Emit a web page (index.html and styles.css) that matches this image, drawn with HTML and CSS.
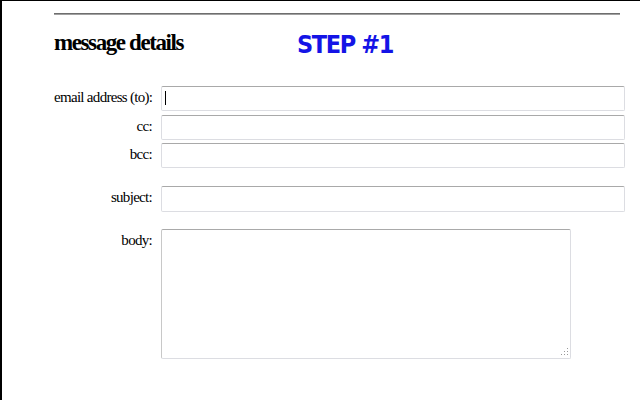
FILE: index.html
```html
<!DOCTYPE html>
<html>
<head>
<meta charset="utf-8">
<link rel="stylesheet" href="styles.css">
</head>
<body>
<div class="frame">
  <hr class="rule">
  <div class="header">
    <h1 class="title">message details</h1>
    <span class="step">STEP #1</span>
  </div>
  <form class="form">
    <div class="row row-to">
      <label class="label">email address (to):</label>
      <div class="field">
        <input class="input" type="text">
        <span class="caret"></span>
      </div>
    </div>
    <div class="row row-cc">
      <label class="label">cc:</label>
      <div class="field"><input class="input" type="text"></div>
    </div>
    <div class="row row-bcc">
      <label class="label">bcc:</label>
      <div class="field"><input class="input" type="text"></div>
    </div>
    <div class="row row-subject">
      <label class="label">subject:</label>
      <div class="field"><input class="input input-tall" type="text"></div>
    </div>
    <div class="row row-body">
      <label class="label">body:</label>
      <div class="field field-area">
        <textarea class="area"></textarea>
        <svg class="grip" width="9" height="10" viewBox="0 0 9 10">
          <rect x="7" y="1" width="1" height="1" fill="#999"/>
          <rect x="4" y="4" width="1" height="1" fill="#999"/>
          <rect x="7" y="4" width="1" height="1" fill="#999"/>
          <rect x="1" y="7" width="1" height="1" fill="#999"/>
          <rect x="4" y="7" width="1" height="1" fill="#999"/>
          <rect x="7" y="7" width="1" height="1" fill="#999"/>
        </svg>
      </div>
    </div>
  </form>
</div>
</body>
</html>
```
FILE: styles.css
```css
html, body {
  margin: 0;
  padding: 0;
  background: #fff;
}
.frame {
  box-sizing: border-box;
  width: 640px;
  height: 400px;
  border-top: 1px solid #000;
  border-left: 2px solid #000;
  padding: 12px 15px 0 52px;
  font-family: "Liberation Serif", "Times New Roman", serif;
  color: #000;
  overflow: hidden;
}
.rule {
  margin: 0;
  width: 566px;
  height: 0;
  border: 0;
  border-top: 1px solid #6e6e6e;
  border-bottom: 1px solid #a0a0a0;
}
.header {
  display: flex;
  align-items: flex-start;
}
.title {
  margin: 16px 0 0 0;
  width: 243px;
  font-size: 23px;
  line-height: 23px;
  font-weight: bold;
  letter-spacing: -1.4px;
  white-space: nowrap;
}
.step {
  margin-top: 17px;
  font-family: "DejaVu Sans Condensed", "DejaVu Sans", sans-serif;
  font-weight: bold;
  font-size: 25px;
  line-height: 25px;
  letter-spacing: -1.4px;
  color: #1414e6;
}
.form {
  margin: 29px 0 0 0;
}
.row {
  display: flex;
  align-items: flex-start;
}
.row-cc { margin-top: 4px; }
.row-bcc { margin-top: 3px; }
.row-subject { margin-top: 18px; }
.row-body { margin-top: 17px; }
.label {
  width: 98px;
  margin-right: 9px;
  text-align: right;
  font-size: 15px;
  line-height: 22px;
  letter-spacing: -0.7px;
  white-space: nowrap;
}
.field {
  position: relative;
  width: 464px;
}
.input {
  display: block;
  box-sizing: border-box;
  width: 464px;
  height: 25px;
  margin: 0;
  padding: 0 4px;
  border: 1px solid #dcdde2;
  border-top-color: #a9a9a9;
  border-radius: 2px;
  background: #fff;
  outline: none;
}
.input-tall {
  height: 26px;
}
.caret {
  position: absolute;
  left: 4px;
  top: 5px;
  width: 1px;
  height: 14px;
  background: #000;
}
.field-area {
  width: 410px;
}
.area {
  display: block;
  box-sizing: border-box;
  width: 410px;
  height: 130px;
  margin: 0;
  border: 1px solid #dcdde2;
  border-top-color: #a9a9a9;
  border-left-color: #c8c8c8;
  border-radius: 2px;
  resize: none;
  outline: none;
  background: #fff;
}
.grip {
  position: absolute;
  right: 2px;
  bottom: 2px;
}
```
